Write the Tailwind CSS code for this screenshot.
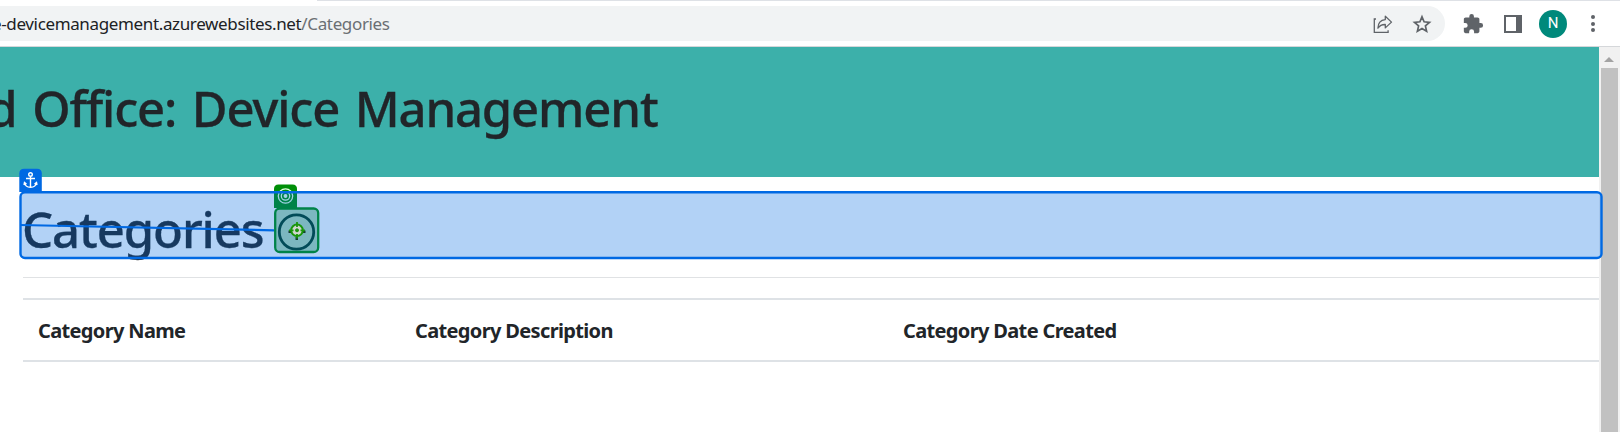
<!DOCTYPE html>
<html lang="en">
<head>
<meta charset="utf-8">
<title>Categories</title>
<script src="https://cdn.jsdelivr.net/npm/@tailwindcss/browser@4"></script>
</head>
<body class="relative flex h-[432px] w-[1620px] flex-col overflow-hidden bg-white font-['Noto_Sans',sans-serif] text-[#212529]">
  <!-- Browser toolbar -->
  <div class="flex h-[47px] shrink-0 flex-col border-b border-[#d5d7da] bg-white">
    <div class="ml-[317px] h-px shrink-0 bg-[#dee1e6]"></div>
    <div class="mt-[5px] flex h-[35px] items-center">
      <div class="flex h-[35px] w-[1445px] items-center justify-between rounded-r-full bg-[#f1f3f4] pr-[12px]">
        <div class="-ml-[8px] whitespace-nowrap text-[17px] leading-[35px] tracking-[-0.36px] text-[#202124]">e-devicemanagement.azurewebsites.net<span class="text-[#6b6f73]">/Categories</span></div>
        <div class="flex items-center gap-[19px] pr-px">
          <svg class="h-5 w-5" viewBox="0 0 20 20" fill="none" stroke="#5f6368" stroke-width="1.3"><path d="M3 5H1.300v13.400h13.800v-2.200"/><path d="M12.300 2.300v3.300C7.400 6 5 9 4.900 14.200c1.800-2.700 4-3.800 7.400-3.700v3.400l6.200-5.800z" stroke-linejoin="round"/></svg>
          <svg class="h-5 w-5" viewBox="0 0 20 20" fill="none" stroke="#5f6368" stroke-width="1.7"><path d="M10 2.800l2.100 5 5.400.5-4.100 3.600 1.200 5.300-4.600-2.800-4.600 2.800 1.200-5.300-4.100-3.600 5.400-.5z"/></svg>
        </div>
      </div>
      <svg class="ml-[17px] h-[22px] w-[22px]" viewBox="0 0 24 24" fill="#5f6368"><path d="M20.500 11H19V7c0-1.100-.9-2-2-2h-4V3.500a2.500 2.500 0 0 0-5 0V5H4c-1.100 0-2 .9-2 2v3.800h1.500a2.700 2.700 0 0 1 0 5.400H2V20c0 1.100.9 2 2 2h3.800v-1.500a2.700 2.700 0 0 1 5.400 0V22H17c1.100 0 2-.9 2-2v-4h1.500a2.500 2.500 0 0 0 0-5z"/></svg>
      <div class="ml-[20px] h-[18px] w-[18px] border-2 border-r-[6px] border-[#5f6368]"></div>
      <div class="ml-[17px] flex h-7 w-7 items-center justify-center rounded-full bg-[#00897b] font-[Roboto,sans-serif] text-[15px] text-white">N</div>
      <div class="ml-[23.5px] flex flex-col gap-[2.500px]">
        <div class="h-[4px] w-[4px] rounded-full bg-[#5f6368]"></div>
        <div class="h-[4px] w-[4px] rounded-full bg-[#5f6368]"></div>
        <div class="h-[4px] w-[4px] rounded-full bg-[#5f6368]"></div>
      </div>
    </div>
  </div>

  <div class="flex min-h-0 flex-1">
    <div class="flex w-[1599px] shrink-0 flex-col">
      <header class="h-[130px] bg-[#3cb0aa]">
        <div class="flex w-[657.5px] justify-end overflow-hidden pt-[27px]">
          <h1 class="whitespace-nowrap text-[49px] leading-[68px] font-medium tracking-[-1.15px] [word-spacing:4px] [-webkit-text-stroke:0.3px_#212529]">d Office: Device Management</h1>
        </div>
      </header>
      <main class="flex flex-col pl-[23px]">
        <div class="flex h-[101px] items-start gap-[12px] border-b border-[#e0e2e4] pt-[18px]">
          <h1 class="-ml-px w-[242px] whitespace-nowrap text-[49px] leading-[68px] font-medium tracking-[-1.08px] [-webkit-text-stroke:0.3px_#212529]">Categories</h1>
          <svg class="mt-[18px] h-[38px] w-[38px] overflow-visible" viewBox="0 0 38 38" fill="none" stroke="#06222c" stroke-width="2.800"><circle cx="20.500" cy="19" r="17.200"/></svg>
        </div>
        <div class="mt-[20px] flex h-[64px] items-center border-y-2 border-[#dee2e6] pt-[2px] pl-[15px] text-[20px] font-bold tracking-[-0.65px]">
          <div class="w-[377px] whitespace-nowrap">Category Name</div>
          <div class="w-[488px] whitespace-nowrap">Category Description</div>
          <div class="whitespace-nowrap">Category Date Created</div>
        </div>
      </main>
    </div>
    <!-- Scrollbar -->
    <div class="flex w-[21px] flex-col items-center bg-[#f1f1f1] pr-px">
      <div class="flex h-[21px] items-center pt-[3px]"><svg class="h-[5px] w-[10px]" viewBox="0 0 10 5" fill="#a3a3a3"><path d="M0 5L5 0l5 5z"/></svg></div>
      <div class="w-[17px] flex-1 bg-[#c1c1c1]"></div>
    </div>
  </div>

  <!-- Anchor and target highlights -->
  <svg class="absolute top-0 left-0 h-[432px] w-[1620px]" viewBox="0 0 1620 432" fill="none">
    <path d="M274 208v-19q0-4.500 4.500-4.500h14q4.500 0 4.500 4.500v19z" fill="#008f08"/>
    <g stroke="#e8ffe8" stroke-width="1.300"><circle cx="285.500" cy="196" r="7.200"/><circle cx="285.500" cy="196" r="4.200"/><circle cx="285.500" cy="196" r="1.300" fill="#e8ffe8"/></g>
    <rect x="275.200" y="208.500" width="43" height="43.500" rx="4.500" fill="#008000" fill-opacity=".3" stroke="#008f08" stroke-width="2.300"/>
    <path d="M19.300 192v-18.500q0-4.800 4.800-4.800h12.900q4.800 0 4.800 4.800v18.500z" fill="#0069e3"/>
    <g stroke="#fff" stroke-width="1.400"><circle cx="30.500" cy="174.500" r="1.800"/><path d="M30.500 176.500v11M26 178.500h9M24.500 182.500c.5 3 3 4.800 6 4.800s5.500-1.800 6-4.800M24 185l.5-2.500 2 1.500M37 185l-.5-2.500-2 1.500"/></g>
    <rect x="20.500" y="192.300" width="1581" height="65.700" rx="4.500" fill="#0069e0" fill-opacity=".3" stroke="#0069e3" stroke-width="2.400"/>
    <path d="M20 225L274 230.300" stroke="#0069e3" stroke-width="2.200"/>
    <path d="M295.500 237h2.500v3h-2.500zM288.500 230.500h3v2.500h-3zM302.500 230.500h3v2.500h-3z" fill="#143a30"/>
    <g stroke="#1a960c"><circle cx="297" cy="230.300" r="5.800" fill="#cfd6cf" stroke-width="2"/><path d="M297 222v5M297 234v4.500M289 230.300h4.500M300.500 230.300h4.500" stroke-width="1.800"/><circle cx="297" cy="230.300" r="1.500" fill="#1a960c"/></g>
  </svg>
</body>
</html>
